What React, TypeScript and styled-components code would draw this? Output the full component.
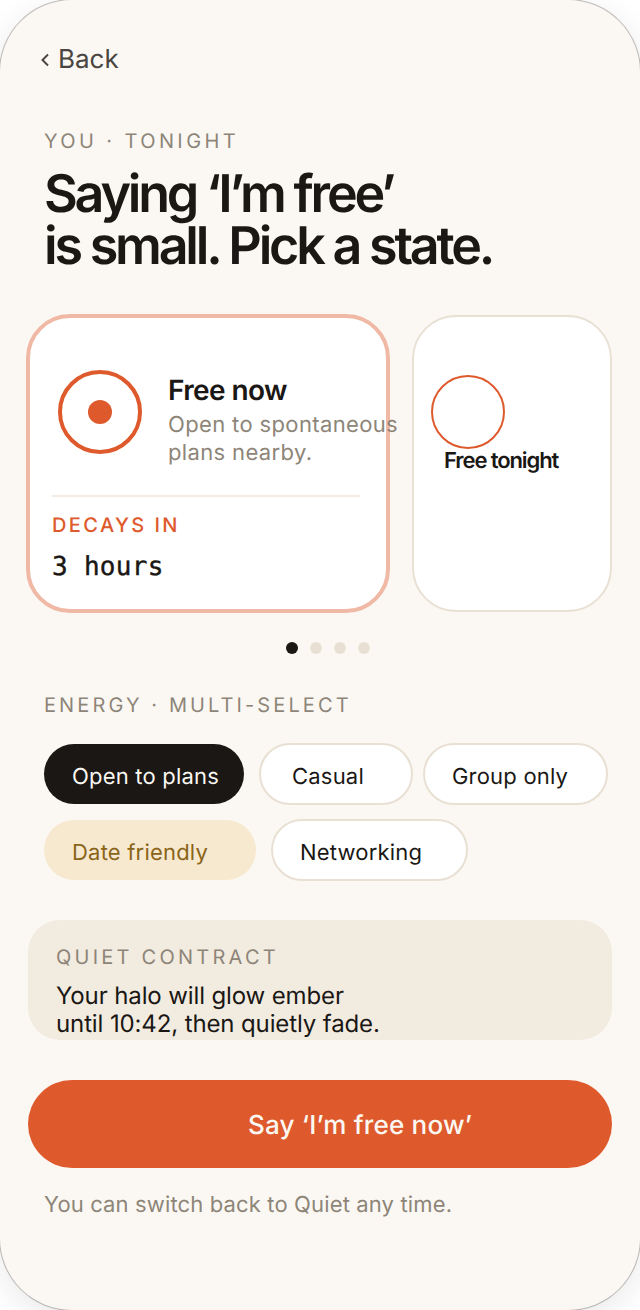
import * as React from 'react';
import styled, { createGlobalStyle } from 'styled-components';

const GlobalStyle = createGlobalStyle`
	html, body {
		margin: 0;
		padding: 0;
		background: #ffffff;
		overflow: hidden;
	}
	* {
		box-sizing: border-box;
	}
`;

const Screen = styled.div`
	width: 640px;
	height: 1310px;
	border-radius: 72px;
	background: #fbf8f3;
	overflow: hidden;
	font-family: Inter, "Noto Sans", sans-serif;
	text-rendering: geometricPrecision;
	color: #1a1714;
	box-shadow: 0 0 0 1px rgba(60, 50, 40, 0.3), 0 8px 30px rgba(30, 30, 50, 0.1);
	padding-top: 43px;
`;

const BackLink = styled.div`
	display: flex;
	align-items: center;
	gap: 8px;
	height: 34px;
	padding-left: 40px;
	font-size: 26px;
	line-height: 34px;
	color: #4a4540;
`;

const Eyebrow = styled.div<{ $top: number; $tracking: number }>`
	margin-top: ${props => props.$top}px;
	padding-left: 44px;
	font-size: 20px;
	line-height: 24px;
	font-weight: 400;
	letter-spacing: ${props => props.$tracking}px;
	color: #8d8578;
	white-space: pre;
`;

const Heading = styled.h1`
	margin: 15px 0 0;
	padding-left: 44px;
	font-size: 52px;
	line-height: 52px;
	font-weight: 600;
	letter-spacing: -3.2px;
	color: #1a1714;
`;

const Carousel = styled.div`
	display: flex;
	align-items: stretch;
	gap: 24px;
	height: 297px;
	margin-top: 43px;
	padding-left: 28px;
`;

const ActiveCard = styled.div`
	width: 364px;
	margin: -1px -2px;
	background: #ffffff;
	border: 4px solid #f0b9a6;
	border-radius: 44px;
	padding: 52px 26px 0 22px;
`;

const CardTop = styled.div`
	display: flex;
	align-items: flex-start;
	gap: 26px;
	padding-left: 6px;
	height: 127px;
	border-bottom: 2px solid #f2ece2;
`;

const Halo = styled.div`
	flex: none;
	width: 84px;
	height: 84px;
	border: 4px solid #de5a2c;
	border-radius: 50%;
	display: flex;
	align-items: center;
	justify-content: center;
`;

const HaloDot = styled.div`
	width: 24px;
	height: 24px;
	border-radius: 50%;
	background: #de5a2c;
`;

const CardTitle = styled.div`
	margin-top: 2px;
	font-size: 28px;
	line-height: 36px;
	font-weight: 600;
	letter-spacing: -0.6px;
`;

const CardBody = styled.div`
	margin-top: 3px;
	font-size: 22px;
	line-height: 28px;
	letter-spacing: 0.36px;
	color: #8d8578;
	white-space: nowrap;
`;

const DecayLabel = styled.div`
	margin-top: 16px;
	font-size: 20px;
	line-height: 24px;
	font-weight: 500;
	letter-spacing: 0.12em;
	color: #de5a2c;
`;

const DecayValue = styled.div`
	margin-top: 13px;
	font-family: "DejaVu Sans Mono", "Liberation Mono", monospace;
	font-size: 26px;
	line-height: 34px;
	letter-spacing: 0.3px;
	-webkit-text-stroke: 0.4px #1a1714;
`;

const SideCard = styled.div`
	width: 200px;
	background: #ffffff;
	border: 2px solid #e9e0d4;
	border-radius: 44px;
	padding: 58px 0 0 17px;
`;

const SideHalo = styled.div`
	width: 74px;
	height: 74px;
	border: 2px solid #de5a2c;
	border-radius: 50%;
`;

const SideTitle = styled.div`
	margin: -2px 0 0 13px;
	font-size: 22px;
	line-height: 28px;
	font-weight: 600;
	letter-spacing: -1.1px;
`;

const Dots = styled.div`
	display: flex;
	justify-content: center;
	gap: 12px;
	margin-top: 30px;
	padding-left: 16px;
`;

const Dot = styled.span<{ $active?: boolean }>`
	width: 12px;
	height: 12px;
	border-radius: 50%;
	background: ${props => (props.$active ? '#1a1714' : '#e9e0d4')};
`;

const Chips = styled.div`
	display: flex;
	flex-wrap: wrap;
	align-items: center;
	row-gap: 14px;
	width: 590px;
	margin: 26px 0 0 44px;
`;

const Chip = styled.div<{ $variant?: 'dark' | 'warm'; $width: number; $pad: number; $gap?: number }>`
	width: ${props => props.$width}px;
	height: ${props => (props.$variant ? 60 : 62)}px;
	margin-left: ${props => props.$gap || 0}px;
	display: flex;
	align-items: center;
	border-radius: 31px;
	font-size: 22px;
	letter-spacing: 0.2px;
	padding: 6px 0 0 ${props => props.$pad}px;
	white-space: nowrap;
	background: ${props => (props.$variant === 'dark' ? '#1a1714' : props.$variant === 'warm' ? '#f7e9d0' : '#ffffff')};
	color: ${props => (props.$variant === 'dark' ? '#fbf8f3' : props.$variant === 'warm' ? '#8a6418' : '#1a1714')};
	border: ${props => (props.$variant ? 'none' : '2px solid #e9e0d4')};
`;

const Contract = styled.div`
	height: 120px;
	margin: 39px 28px 0;
	padding: 24px 28px 0;
	border-radius: 32px;
	background: #f2ebe0;
	overflow: hidden;
`;

const ContractLabel = styled.div`
	font-size: 20px;
	line-height: 26px;
	font-weight: 400;
	letter-spacing: 3.25px;
	color: #8d8578;
	white-space: pre;
`;

const ContractText = styled.div`
	margin-top: 12px;
	font-size: 24px;
	line-height: 28px;
	letter-spacing: -0.12px;
	color: #1a1714;
`;

const PrimaryButton = styled.div`
	height: 88px;
	margin: 40px 28px 0;
	padding: 2px 0 0 80px;
	display: flex;
	align-items: center;
	justify-content: center;
	border-radius: 44px;
	background: #de5a2c;
	color: #fbf8f3;
	font-size: 26px;
	font-weight: 500;
	letter-spacing: 0.2px;
`;

const Footnote = styled.div`
	margin-top: 23px;
	padding-left: 44px;
	font-size: 22px;
	line-height: 28px;
	letter-spacing: 0.14px;
	color: #8d8578;
`;

const Chevron = () => (
	<svg width="10" height="16" viewBox="0 0 10 16" fill="none">
		<path d="M8 2.5 L2.5 8 L8 13.5" stroke="#4a4540" strokeWidth="2" />
	</svg>
);

export default function App() {
	return (
		<>
			<GlobalStyle />
			<Screen>
				<BackLink>
					<Chevron />
					Back
				</BackLink>
				<Eyebrow $top={52} $tracking={3.4}>YOU · TONIGHT</Eyebrow>
				<Heading>
					Saying ‘I’m free’
					<br />
					is small. Pick a state.
				</Heading>
				<Carousel>
					<ActiveCard>
						<CardTop>
							<Halo>
								<HaloDot />
							</Halo>
							<div>
								<CardTitle>Free now</CardTitle>
								<CardBody>
									Open to spontaneous
									<br />
									plans nearby.
								</CardBody>
							</div>
						</CardTop>
						<DecayLabel>DECAYS IN</DecayLabel>
						<DecayValue>3 hours</DecayValue>
					</ActiveCard>
					<SideCard>
						<SideHalo />
						<SideTitle>Free tonight</SideTitle>
					</SideCard>
				</Carousel>
				<Dots>
					<Dot $active />
					<Dot />
					<Dot />
					<Dot />
				</Dots>
				<Eyebrow $top={39} $tracking={3.1}>ENERGY · MULTI-SELECT</Eyebrow>
				<Chips>
					<Chip $variant="dark" $width={200} $pad={28}>Open to plans</Chip>
					<Chip $width={154} $pad={31} $gap={15}>Casual</Chip>
					<Chip $width={185} $pad={27} $gap={10}>Group only</Chip>
					<Chip $variant="warm" $width={212} $pad={28}>Date friendly</Chip>
					<Chip $width={197} $pad={27} $gap={15}>Networking</Chip>
				</Chips>
				<Contract>
					<ContractLabel>QUIET CONTRACT</ContractLabel>
					<ContractText>
						Your halo will glow ember
						<br />
						until 10:42, then quietly fade.
					</ContractText>
				</Contract>
				<PrimaryButton>Say ‘I’m free now’</PrimaryButton>
				<Footnote>You can switch back to Quiet any time.</Footnote>
			</Screen>
		</>
	);
}
